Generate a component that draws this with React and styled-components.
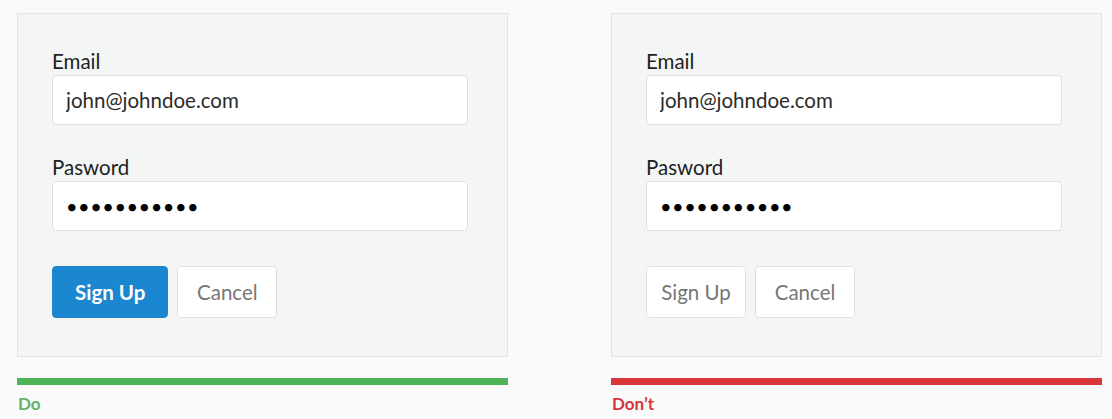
import React from "react";
import styled, { createGlobalStyle } from "styled-components";

const Global = createGlobalStyle`
  html, body { margin: 0; padding: 0; background: #fafafa; }
  body { font-family: Lato, "Open Sans", sans-serif; -webkit-font-smoothing: antialiased; }
  * { box-sizing: border-box; }
`;

const Page = styled.div`
  display: flex;
  gap: 103px;
  padding: 13px 10px 0 17px;
  width: 1112px;
  height: 419px;
  overflow: hidden;
`;

const Column = styled.section`
  width: 491px;
  display: flex;
  flex-direction: column;
`;

const Panel = styled.form`
  background: #f4f5f5;
  border: 1px solid #e2e4e4;
  padding: 35px 39px 38px 34px;
  display: flex;
  flex-direction: column;
`;

const Label = styled.label`
  display: block;
  font-size: 20.5px;
  line-height: 24px;
  color: #1f1f1f;
  margin-bottom: 2px;
`;

const Field = styled.div`
  display: flex;
  flex-direction: column;
  margin-bottom: ${(p) => p.$mb}px;
`;

const Input = styled.input`
  display: block;
  width: 416px;
  height: 50px;
  border: 1px solid #dedfdf;
  border-radius: 4px;
  background: #fff;
  padding: 0 13px;
  font-family: Lato, sans-serif;
  font-size: 20.5px;
  color: #2b2b2b;
  outline: none;
  &[type="password"] {
    font-size: 20px;
    letter-spacing: 0.5px;
    color: #000;
  }
`;

const Buttons = styled.div`
  display: flex;
  gap: 9px;
`;

const Button = styled.button`
  height: 52px;
  min-width: 100px;
  padding: 0 ${(p) => (p.$primary ? 22 : 14)}px;
  border-radius: 4px;
  border: 1px solid ${(p) => (p.$primary ? "#1a87d0" : "#dfe0e0")};
  background: ${(p) => (p.$primary ? "#1a87d0" : "#fff")};
  color: ${(p) => (p.$primary ? "#fff" : "#777")};
  font-family: Lato, sans-serif;
  font-size: 20.5px;
  font-weight: ${(p) => (p.$primary ? 700 : 400)};
  display: flex;
  align-items: center;
  justify-content: center;
  cursor: pointer;
`;

const Bar = styled.div`
  height: 7px;
  margin-top: 21px;
  background: ${(p) => p.$color};
`;

const Verdict = styled.div`
  margin-top: 9px;
  font-size: 17px;
  line-height: 20px;
  font-weight: 700;
  color: ${(p) => p.$color};
  padding-left: 1px;
`;

function Example({ good }) {
  return (
    <Column>
      <Panel onSubmit={(e) => e.preventDefault()}>
        <Field $mb={30}>
          <Label>Email</Label>
          <Input type="text" readOnly defaultValue="john@johndoe.com" />
        </Field>
        <Field $mb={35}>
          <Label>Pasword</Label>
          <Input type="password" readOnly defaultValue="abcdefghijk" />
        </Field>
        <Buttons>
          <Button type="button" $primary={good}>Sign Up</Button>
          <Button type="button">Cancel</Button>
        </Buttons>
      </Panel>
      <Bar $color={good ? "#4eb356" : "#d9363a"} />
      <Verdict $color={good ? "#5fb565" : "#d2363b"}>
        {good ? "Do" : "Don’t"}
      </Verdict>
    </Column>
  );
}

export default function App() {
  return (
    <>
      <Global />
      <Page>
        <Example good />
        <Example good={false} />
      </Page>
    </>
  );
}
